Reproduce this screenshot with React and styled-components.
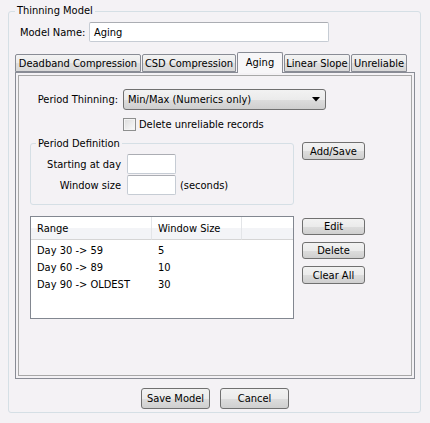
import React from "react";
import styled, { createGlobalStyle } from "styled-components";

const BG = "#f4f2f5";
const FONT = `Tahoma, "DejaVu Sans Condensed", "Liberation Sans", Arial, sans-serif`;

const Global = createGlobalStyle`
  html, body { margin: 0; padding: 0; background: ${BG}; }
  body { font-family: ${FONT}; font-size: 11px; color: #000; }
  * { box-sizing: border-box; }
`;

const Page = styled.div`
  width: 430px;
  height: 423px;
  padding: 4px 0 0 8px;
  background: ${BG};
`;

const Group = styled.fieldset`
  margin: 0;
  width: ${(p) => p.$w}px;
  height: ${(p) => p.$h}px;
  padding: ${(p) => p.$pad};
  border: 1px solid #d5dfe5;
  border-radius: 3px;
  min-inline-size: 0;
`;

const Legend = styled.legend`
  padding: 0 2px;
  margin-left: ${(p) => p.$ml || 0}px;
  line-height: ${(p) => p.$lh || 14}px;
  font-size: 11px;
`;

const Row = styled.div`
  display: flex;
  align-items: ${(p) => p.$align || "center"};
  gap: ${(p) => p.$gap || 0}px;
  margin-top: ${(p) => p.$mt || 0}px;
  padding-left: ${(p) => p.$pl || 0}px;
`;

const Label = styled.label`
  display: block;
  width: ${(p) => p.$w}px;
  text-align: ${(p) => p.$align || "left"};
  white-space: nowrap;
`;

const TextBox = styled.div`
  width: ${(p) => p.$w}px;
  height: 20px;
  background: #fff;
  border: 1px solid #c6ccd4;
  border-top-color: #abadb3;
  border-radius: 2px;
  display: flex;
  align-items: center;
  padding-left: 4px;
`;

const TabBar = styled.div`
  display: flex;
  align-items: flex-end;
  gap: 1px;
  height: 21px;
  margin-top: 9px;
  position: relative;
  z-index: 1;
`;

const Tab = styled.div`
  width: ${(p) => p.$w}px;
  height: ${(p) => (p.$active ? 21 : 18)}px;
  margin-bottom: ${(p) => (p.$active ? -1 : 0)}px;
  padding: ${(p) => (p.$active ? "3px 0 0" : "0")};
  border: 1px solid #898c95;
  border-bottom: ${(p) => (p.$active ? "none" : "1px solid #898c95")};
  border-radius: 2px 2px 0 0;
  background: ${(p) =>
    p.$active ? "#f7f6f8" : "linear-gradient(#f3f3f3, #ebebeb 50%, #dedede 51%, #d8d8d8)"};
  display: flex;
  align-items: ${(p) => (p.$active ? "flex-start" : "center")};
  justify-content: center;
  white-space: nowrap;
`;

const Panel = styled.div`
  width: 400px;
  height: 307px;
  border: 1px solid #898c95;
  box-shadow: inset 0 0 0 2px ${BG}, inset 0 0 0 3px #a8a8a8;
  padding: 16px 0 0 14px;
`;

const Select = styled.div`
  width: 203px;
  height: 21px;
  border: 1px solid #707070;
  border-radius: 3px;
  background: linear-gradient(#f2f2f2, #ebebeb 50%, #dddddd 51%, #cfcfcf);
  display: flex;
  align-items: center;
  justify-content: space-between;
  padding: 0 5px 0 4px;
`;

const Check = styled.span`
  width: 13px;
  height: 13px;
  border: 1px solid #8e8f8f;
  background: linear-gradient(135deg, #dcdcdc, #fbfbfb);
  box-shadow: inset 0 0 0 1px #f4f4f4;
`;

const DefRow = styled.div`
  display: flex;
  align-items: flex-start;
  gap: 8px;
  margin-top: 6px;
`;

const FieldGrid = styled.div`
  display: grid;
  grid-template-columns: 90px 49px auto;
  column-gap: 6px;
  row-gap: 1px;
  align-items: center;
  margin-top: 4px;
`;

const Unit = styled.span`
  margin-left: -2px;
`;

const Button = styled.button`
  width: ${(p) => p.$w}px;
  height: ${(p) => p.$h}px;
  margin-top: ${(p) => p.$mt || 0}px;
  border: 1px solid #707070;
  border-radius: 3px;
  background: linear-gradient(#f2f2f2, #ebebeb 50%, #dddddd 51%, #cfcfcf);
  font-family: ${FONT};
  font-size: 11px;
  color: #000;
  padding: 0;
  line-height: 1;
`;

const ButtonCol = styled.div`
  display: flex;
  flex-direction: column;
  gap: 7px;
  margin-top: 13px;
`;

const ListBox = styled.div`
  width: 264px;
  height: 103px;
  background: #fff;
  border: 1px solid #828790;
  margin-top: 11px;
`;

const ListGrid = styled.div`
  display: grid;
  grid-template-columns: 121px 90px 1fr;
`;

const HeadCell = styled.div`
  height: 23px;
  display: flex;
  align-items: center;
  padding-left: 6px;
  background: linear-gradient(#ffffff, #ffffff 50%, #f3f4f7 51%, #f3f4f7);
  border-bottom: 1px solid #d5d5d5;
  border-right: ${(p) => (p.$last ? "none" : "1px solid #e3e5e8")};
`;

const Cell = styled.div`
  height: 17px;
  display: flex;
  align-items: center;
  padding-left: 6px;
  margin-top: ${(p) => (p.$first ? 2 : 0)}px;
`;

const BottomBar = styled.div`
  display: flex;
  justify-content: center;
  gap: 10px;
  margin-top: 9px;
`;

const rows = [
  ["Day 30 -> 59", "5"],
  ["Day 60 -> 89", "10"],
  ["Day 90 -> OLDEST", "30"],
];

const tabs = [
  ["Deadband Compression", 126],
  ["CSD Compression", 94],
  ["Aging", 46],
  ["Linear Slope", 66],
  ["Unreliable", 56],
];

export default function App() {
  return (
    <>
      <Global />
      <Page>
        <Group $w={413} $h={409} $pad="0 5px 4px 6px">
          <Legend>Thinning Model</Legend>
          <Row $gap={7} $mt={4} $pl={5}>
            <Label $w={62}>Model Name:</Label>
            <TextBox $w={240}>Aging</TextBox>
          </Row>
          <TabBar>
            {tabs.map(([t, w]) => (
              <Tab key={t} $w={w} $active={t === "Aging"}>
                {t}
              </Tab>
            ))}
          </TabBar>
          <Panel>
            <Row $gap={5}>
              <Label $w={88} $align="right">
                Period Thinning:
              </Label>
              <Select>
                <span>Min/Max (Numerics only)</span>
                <svg width="8" height="5" viewBox="0 0 8 5">
                  <path d="M0 0h8L4 4.5z" fill="#000" />
                </svg>
              </Select>
            </Row>
            <Row $gap={3} $mt={8} $pl={93}>
              <Check />
              <span>Delete unreliable records</span>
            </Row>
            <DefRow>
              <Group $w={264} $h={68} $pad="0">
                <Legend $lh={13} $ml={5}>Period Definition</Legend>
                <FieldGrid>
                  <Label $w={90} $align="right">Starting at day</Label>
                  <TextBox $w={49} />
                  <span />
                  <Label $w={90} $align="right">Window size</Label>
                  <TextBox $w={49} />
                  <Unit>(seconds)</Unit>
                </FieldGrid>
              </Group>
              <Button $w={63} $h={18} $mt={5}>Add/Save</Button>
            </DefRow>
            <Row $gap={8} $align="flex-start">
              <ListBox>
                <ListGrid>
                  <HeadCell>Range</HeadCell>
                  <HeadCell>Window Size</HeadCell>
                  <HeadCell $last />
                  {rows.map(([r, w], i) => (
                    <React.Fragment key={r}>
                      <Cell $first={i === 0}>{r}</Cell>
                      <Cell $first={i === 0}>{w}</Cell>
                      <Cell $first={i === 0} />
                    </React.Fragment>
                  ))}
                </ListGrid>
              </ListBox>
              <ButtonCol>
                <Button $w={63} $h={17}>Edit</Button>
                <Button $w={63} $h={17}>Delete</Button>
                <Button $w={63} $h={18}>Clear All</Button>
              </ButtonCol>
            </Row>
          </Panel>
          <BottomBar>
            <Button $w={69} $h={21}>Save Model</Button>
            <Button $w={69} $h={21}>Cancel</Button>
          </BottomBar>
        </Group>
      </Page>
    </>
  );
}
